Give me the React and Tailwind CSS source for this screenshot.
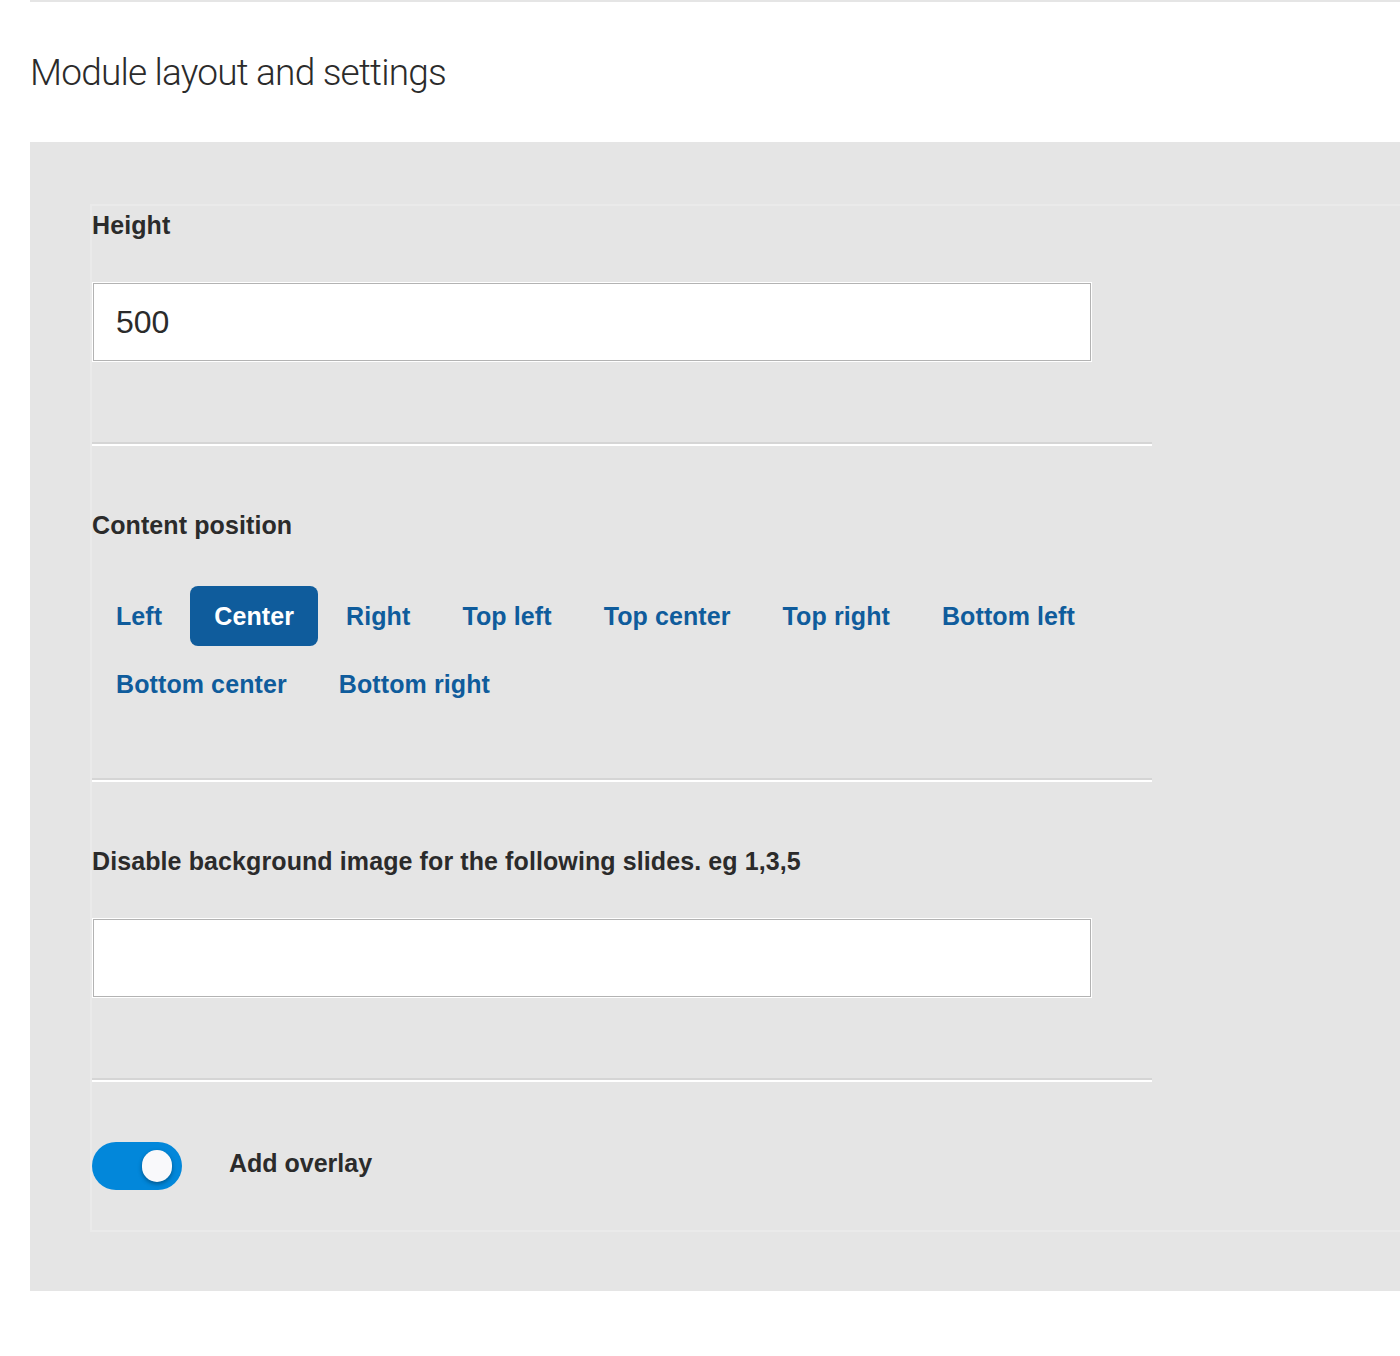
import React from "react";

const positions = [
  "Left",
  "Center",
  "Right",
  "Top left",
  "Top center",
  "Top right",
  "Bottom left",
  "Bottom center",
  "Bottom right",
];

function Label({ children }) {
  return (
    <div className="text-[25px] leading-[30px] font-bold tracking-[0.1px] text-[#2b2b2b] h-[30px] whitespace-nowrap">
      {children}
    </div>
  );
}

function Divider() {
  return (
    <div className="w-[1060px]">
      <div className="h-[2px] bg-[#d5d5d5]" />
      <div className="h-[2px] bg-white" />
    </div>
  );
}

function TextInput({ value }) {
  return (
    <div className="w-[1000px] h-[80px] border border-white">
      <div className="w-full h-full border border-[#b3b3b3] bg-white flex items-center pl-[22px] text-[32px] text-[#2b2b2b]">
        {value}
      </div>
    </div>
  );
}

export default function App() {
  const selected = "Center";
  return (
    <div
      className="w-full min-h-[1356px] bg-white overflow-hidden"
      style={{ fontFamily: '"Liberation Sans", Arial, Helvetica, sans-serif' }}
    >
      <div className="ml-[30px] h-[2px] bg-[#e5e5e5]" />
      <div className="h-[140px] pl-[30px] pt-[52px]">
        <h1
          className="text-[37px] leading-[37px] font-light tracking-[-0.8px] text-[#2b2b2b] whitespace-nowrap"
          style={{ fontFamily: 'Roboto, "Liberation Sans", Arial, sans-serif' }}
        >
          Module layout and settings
        </h1>
      </div>
      <div className="ml-[30px] bg-[#e5e5e5] pt-[62px] pl-[60px] pb-[59px]">
        <div className="w-[1400px] border-2 border-[#eaeaea]">
          {/* Height */}
          <div className="pt-[4px]">
            <Label>Height</Label>
            <div className="mt-[42px] mb-[80px]">
              <TextInput value="500" />
            </div>
          </div>
          <Divider />
          {/* Content position */}
          <div className="pt-[64px] pb-[64px]">
            <Label>Content position</Label>
            <div className="mt-[46px] w-[1060px] flex flex-wrap gap-x-[4px] gap-y-[8px]">
              {positions.map((p) => (
                <button
                  key={p}
                  className={
                    p === selected
                      ? "h-[60px] px-[24px] pt-[2px] rounded-[8px] bg-[#0f5c9c] text-white text-[25px] font-bold tracking-[0.1px] flex items-center whitespace-nowrap"
                      : "h-[60px] px-[24px] pt-[2px] rounded-[8px] text-[#0f5c9c] text-[25px] font-bold tracking-[0.1px] flex items-center whitespace-nowrap"
                  }
                >
                  {p}
                </button>
              ))}
            </div>
          </div>
          <Divider />
          {/* Disable bg */}
          <div className="pt-[64px]">
            <Label>Disable background image for the following slides. eg 1,3,5</Label>
            <div className="mt-[42px] mb-[80px]">
              <TextInput value="" />
            </div>
          </div>
          <Divider />
          {/* Overlay toggle */}
          <div className="pt-[60px] pb-[40px] flex items-center">
            <div className="w-[90px] h-[48px] rounded-full bg-[#0287da] flex items-center justify-end pr-[10px]">
              <div className="w-[30px] h-[32px] rounded-full bg-[#f9f9fb] shadow-[0_2px_4px_rgba(0,0,0,0.35)]" />
            </div>
            <div className="ml-[47px] mb-[6px] text-[25px] leading-[30px] font-bold text-[#2b2b2b]">
              Add overlay
            </div>
          </div>
        </div>
      </div>
    </div>
  );
}
